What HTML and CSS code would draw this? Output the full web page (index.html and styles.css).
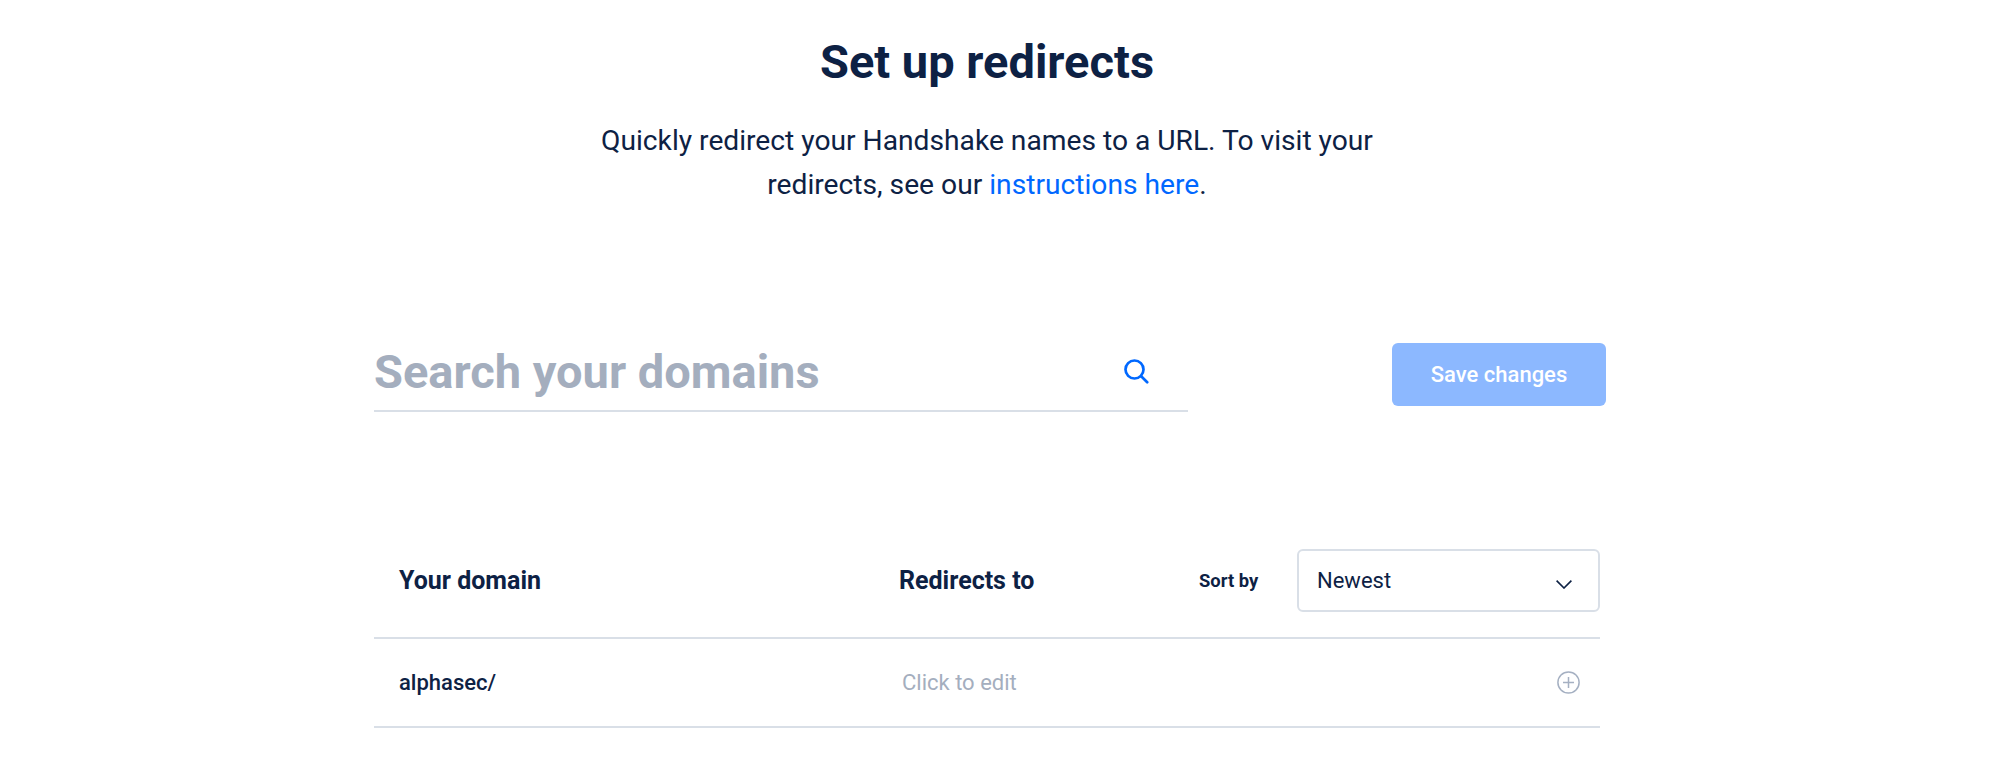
FILE: index.html
```html
<!DOCTYPE html>
<html lang="en">
<head>
    <meta charset="UTF-8">
    <title>Set up redirects</title>
    <link rel="stylesheet" href="styles.css">
</head>
<body>
    <div class="container">
        <h1 class="title">Set up redirects</h1>
        <p class="intro">Quickly redirect your Handshake names to a URL. To visit your<br>redirects, see our <a href="#" class="link">instructions here</a>.</p>

        <div class="toolbar">
            <div class="search">
                <span class="search-text">Search your domains</span>
                <svg class="search-icon" width="26" height="26" viewBox="0 0 26 26" fill="none" stroke="#0068ff" stroke-width="2.7" stroke-linecap="round"><circle cx="11.5" cy="11.5" r="9"/><path d="M18.2 18.2l6 6"/></svg>
            </div>
            <button class="save-btn">Save changes</button>
        </div>

        <div class="table">
            <div class="row head">
                <div class="col-domain">Your domain</div>
                <div class="col-target">Redirects to</div>
                <div class="sort-label">Sort by</div>
                <div class="select">
                    <span>Newest</span>
                    <svg class="chevron" width="16" height="9" viewBox="0 0 16 9" fill="none" stroke="#0d2144" stroke-width="1.6"><path d="M.6.6L8 8l7.4-7.4"/></svg>
                </div>
            </div>
            <div class="row item">
                <div class="col-domain name">alphasec/</div>
                <div class="col-target edit">Click to edit</div>
                <svg class="add-icon" width="23" height="23" viewBox="0 0 23 23" fill="none" stroke="#a5b0c2" stroke-width="1.5"><circle cx="11.5" cy="11.5" r="10.6"/><path d="M11.5 6v11M6 11.5h11"/></svg>
            </div>
        </div>
    </div>
</body>
</html>
```

FILE: styles.css
```css
body {
    font-family: 'Roboto', sans-serif;
    background-color: #fff;
    color: #0d2144;
    margin: 0;
    padding-right: 20px;
}

.container {
    width: 1232px;
    margin: 0 auto;
    padding-top: 34px;
}

.title {
    font-size: 47px;
    line-height: 56px;
    font-weight: 700;
    text-align: center;
    margin: 0 0 29px;
    padding-right: 6px;
}

.intro {
    font-size: 28.2px;
    line-height: 44px;
    text-align: center;
    margin: 0 0 135px;
    padding-right: 6px;
}

.link {
    color: #0068ff;
    text-decoration: none;
}

.toolbar {
    display: flex;
    justify-content: space-between;
    align-items: flex-start;
    margin-bottom: 137px;
}

.search {
    width: 814px;
    height: 58px;
    padding-bottom: 10px;
    display: flex;
    justify-content: space-between;
    align-items: center;
    border-bottom: 2px solid #d9dfe7;
}

.search-text {
    font-size: 47px;
    font-weight: 700;
    color: #a4aebe;
}

.search-icon {
    margin-right: 39px;
}

.save-btn {
    width: 214px;
    height: 63px;
    margin-top: 1px;
    background-color: #8cb8ff;
    color: #fff;
    border: none;
    border-radius: 6px;
    font-family: inherit;
    font-size: 22px;
    font-weight: 500;
}

.table {
    width: 1226px;
}

.row {
    display: flex;
    align-items: center;
    border-bottom: 2px solid #d9dfe7;
    padding-left: 25px;
}

.head {
    padding-bottom: 25px;
}

.item {
    height: 87px;
}

.col-domain {
    width: 500px;
    font-size: 25px;
    font-weight: 700;
}

.col-target {
    width: 300px;
    font-size: 25px;
    font-weight: 700;
}

.sort-label {
    width: 98px;
    font-size: 18.4px;
    font-weight: 700;
}

.select {
    width: 303px;
    height: 63px;
    box-sizing: border-box;
    border: 2px solid #d9dfe7;
    border-radius: 6px;
    display: flex;
    justify-content: space-between;
    align-items: center;
    padding: 0 26px 0 18px;
    font-size: 22px;
}

.chevron {
    margin-top: 8px;
}

.name {
    font-size: 22px;
    font-weight: 500;
}

.edit {
    font-size: 22px;
    font-weight: 400;
    color: #a4aebe;
    margin-left: 3px;
}

.add-icon {
    margin-left: auto;
    margin-right: 20px;
}
```
